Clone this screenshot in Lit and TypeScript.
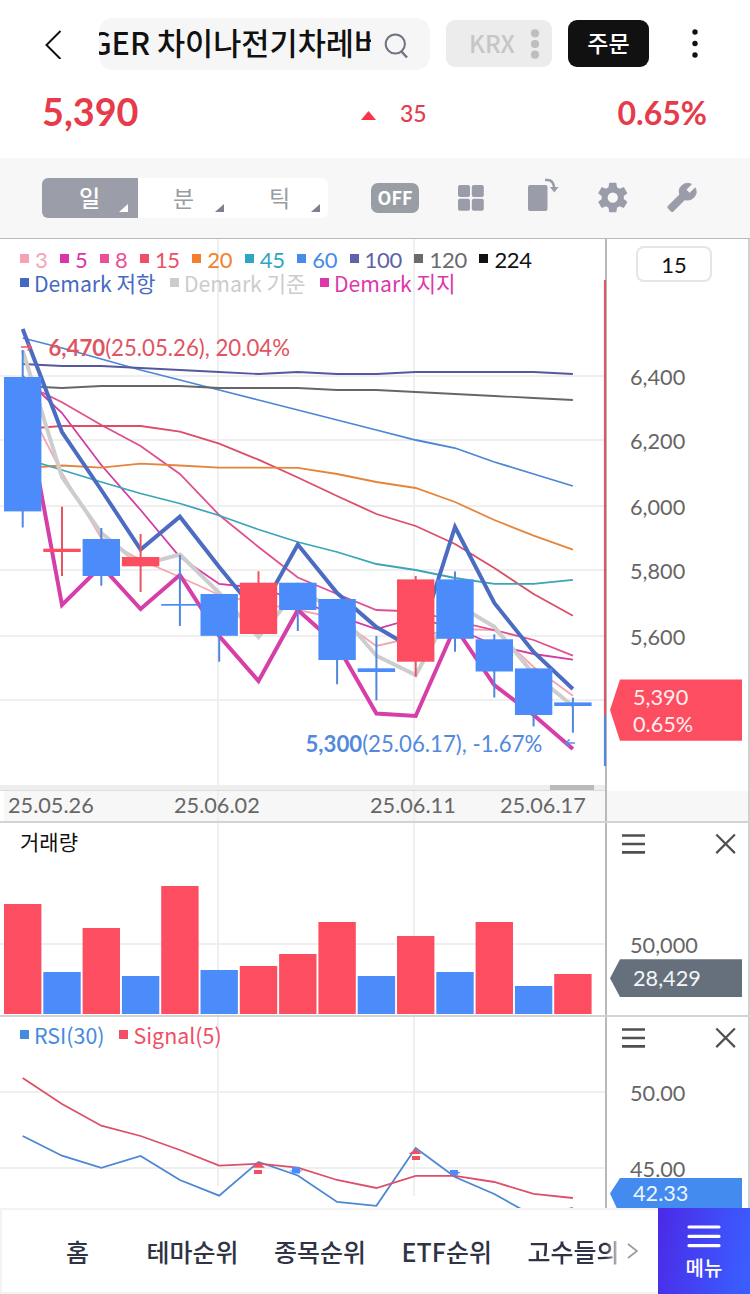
import { html, svg, css, LitElement } from "lit"
import { customElement, property } from "lit/decorators.js"
import { styleMap } from "lit/directives/style-map.js"

const FIRST_X = 22.7
const STEP = 39.3
const BAR = 37.4

const UP = "#fc4e60"
const DOWN = "#4c8cfa"

const x = (i: number) => FIRST_X + STEP * i

// [up, body top, body bottom, wick top, wick bottom]
const candles: [number, number, number, number, number][] = [
  [0, 377, 511.4, 350, 527.5],
  [1, 548.7, 552, 506.7, 576],
  [0, 539, 576, 528, 585.7],
  [1, 557, 566.3, 534, 592],
  [0, 604, 605.7, 555, 626],
  [0, 594, 635.8, 594, 661.7],
  [1, 582.7, 634, 571.3, 634],
  [0, 582.7, 610, 582.7, 631],
  [0, 599, 660, 599, 684.3],
  [0, 668.3, 672, 636, 700.3],
  [1, 579.4, 661.7, 576, 676.7],
  [0, 579.4, 638.8, 571.5, 651.8],
  [0, 639.3, 671.5, 634.3, 697.5],
  [0, 668.4, 715, 668.4, 726.4],
  [0, 702.4, 706, 697.7, 732.7],
]

const lines = [
  { color: "#f5a5b0", width: 1.8, y: [397, 473, 538, 560, 577, 595, 603, 610, 618, 646, 637, 629, 630, 667, 695.7] },
  { color: "#d23aa5", width: 1.8, y: [376, 413, 465, 510, 557, 584, 588, 600, 615.7, 629, 618, 628, 645, 654, 659.7] },
  { color: "#e0508f", width: 1.8, y: [383, 402.3, 425, 446, 474, 515, 547, 577.5, 594, 610, 611.5, 621, 630, 640, 655.7] },
  { color: "#dc4e66", width: 1.8, y: [429, 426, 426, 426, 431.7, 443.7, 459.7, 477.5, 496, 514, 526, 544, 568, 594, 615.7] },
  { color: "#e5853c", width: 1.8, y: [468, 465.5, 467.7, 463.7, 465.5, 467.7, 467.7, 467.9, 474, 482, 488, 502, 520, 535.7, 549.7] },
  { color: "#3ba5b8", width: 1.8, y: [458, 470, 482, 493.5, 503.5, 515.5, 529.5, 542, 552, 564, 570, 578, 583.8, 583.8, 579.8] },
  { color: "#4b87d4", width: 1.8, y: [338, 348, 359, 370, 380, 390, 400, 410, 420, 430, 440, 448, 462, 474, 486] },
  { color: "#5558a0", width: 1.8, y: [364, 366, 366, 368, 370, 372, 374, 372, 374, 374, 372, 372, 372, 372, 374] },
  { color: "#666666", width: 1.8, y: [386, 388, 386, 386, 386, 388, 388, 388, 390, 390, 392, 394, 396, 398, 400] },
  { color: "#cdcdcd", width: 4, y: [350.7, 477, 533, 565, 554.5, 593, 637, 590, 610, 655.7, 675, 603, 626.7, 674, 706] },
  { color: "#d63fa8", width: 4, y: [393, 605, 566, 609, 575, 636, 681, 610, 645, 713.5, 716, 627, 685, 715, 749] },
  { color: "#4b6cc0", width: 4, y: [329, 432, 490, 549.5, 516.7, 567, 615, 544.5, 593, 627, 650, 527, 603, 652, 689] },
]

const volumes: [number, number][] = [
  [1, 904], [0, 972], [1, 928], [0, 976], [1, 886], [0, 970], [1, 966], [1, 954],
  [1, 922], [0, 976], [1, 936], [0, 972], [1, 922], [0, 986], [1, 974],
]

const rsi = [1136, 1155.7, 1167.8, 1156, 1180, 1195.7, 1162, 1175.5, 1202, 1205.8, 1148, 1177, 1194, 1216, 1208]
const signal = [1078, 1104, 1125.7, 1136, 1150, 1165.7, 1163.7, 1167.7, 1180, 1188, 1175.8, 1175.8, 1182, 1193.8, 1198]

const averages = [
  ["3", "#f5a3b3"], ["5", "#d935a8"], ["8", "#ea5097"], ["15", "#ee4f66"], ["20", "#f08030"],
  ["45", "#2fa5c5"], ["60", "#478ae8"], ["100", "#5f62a8"], ["120", "#6b6b6b"], ["224", "#111111"],
]
const demark = [["Demark 저항", "#4668c4"], ["Demark 기준", "#cccccc"], ["Demark 지지", "#dd38ab"]]

const points = (ys: number[]) => ys.map((y, i) => `${x(i).toFixed(1)},${y}`).join(" ")

const polyline = (ys: number[], color: string, width: number) => svg`
  <polyline points=${points(ys)} fill="none" stroke=${color} stroke-width=${width}></polyline>`

const hline = (y: number) => svg`<path d="M0 ${y}H605" stroke="#efefef" stroke-width="2"></path>`

const vlines = (top: number, bottom: number, bottom2 = bottom) => svg`
  <path d="M218 ${top}V${bottom}M414 ${top}V${bottom2}" stroke="#efefef" stroke-width="2"></path>`

const frame = (top: number, bottom: number) => svg`
  <path d="M606 ${top}V${bottom}" stroke="#b9b9b9" stroke-width="2"></path>
  <path d="M749 ${top}V${bottom}" stroke="#bdbdbd" stroke-width="1.4"></path>`

@customElement("chart-legend")
class ChartLegend extends LitElement {
  @property({ attribute: false }) items: string[][] = []

  static styles = css`
  :host {
    display: flex;
    gap: var(--item-gap, 12.5px);
  }

  span {
    display: flex;
    gap: var(--mark-gap, 6px);
    white-space: nowrap;
  }

  i {
    width: 9px;
    height: 9px;
    margin-top: var(--mark-top, 9px);
    background: currentColor;
  }
  `

  render() {
    return this.items.map(([text, color]) => html`
    <span style=${styleMap({ color })}><i></i>${text}</span>
    `)
  }
}

@customElement("pane-actions")
class PaneActions extends LitElement {
  static styles = css`
  :host {
    display: block;
  }

  svg {
    display: block;
  }
  `

  render() {
    return html`
    <svg width="120" height="24" viewBox="0 0 120 24" fill="none" stroke="#505050">
      <path d="M3 3.5h23M3 12h23M3 20.4h23" stroke-width="2.6"></path>
      <path d="M97.3 2.5l18.6 18.6M115.9 2.5L97.3 21.1" stroke-width="2.2"></path>
    </svg>
    `
  }
}

@customElement("app-root")
class AppRoot extends LitElement {
  static styles = css`
  :host {
    display: flex;
    flex-direction: column;
    width: 750px;
    height: 1294px;
    overflow: hidden;
    background: #fff;
    color: #111;
    font-family: "Noto Sans CJK KR", "Noto Sans", sans-serif;
  }

  * {
    box-sizing: border-box;
  }

  svg {
    display: block;
    flex: none;
  }

  svg text {
    font-family: Lato, "Noto Sans CJK KR", sans-serif;
    font-size: 21.7px;
    fill: #666;
  }

  svg .extreme {
    font-size: 22.2px;
  }

  header {
    display: flex;
    flex: none;
    align-items: center;
    height: 88px;
    padding-left: 44px;
  }

  .search {
    display: flex;
    align-items: center;
    width: 331px;
    height: 52px;
    margin-left: 37px;
    border-radius: 14px;
    background: #f6f6f6;
  }

  .name {
    width: 272px;
    height: 52px;
    overflow: hidden;
    font-size: 30.6px;
    font-weight: 500;
    line-height: 49px;
    white-space: nowrap;
  }

  .name span {
    margin-left: -37px;
  }

  .search svg {
    margin-left: 13px;
  }

  .market, .order {
    display: flex;
    align-items: center;
    height: 47px;
    margin: -1px 0 0 16px;
    border-radius: 9px;
    font-weight: 500;
  }

  .market {
    gap: 15px;
    width: 106px;
    padding-left: 23px;
    background: #ececec;
    color: #c6c6c6;
    font-size: 24px;
  }

  .market span, .order span {
    margin-top: -3px;
  }

  .order {
    justify-content: center;
    width: 81px;
    background: #111;
    color: #fff;
    font-size: 23px;
  }

  .more {
    margin-left: 42px;
  }

  .quote {
    display: grid;
    flex: none;
    grid-template-columns: 318px 1fr auto;
    align-items: center;
    height: 70px;
    padding: 0 43px 22px;
    color: #e63b4b;
    font-family: Lato, sans-serif;
    font-weight: 700;
  }

  .price {
    margin: -2px 0 0 -1px;
    font-size: 37.8px;
  }

  .change {
    display: flex;
    align-items: center;
    gap: 24px;
    padding-top: 2px;
    font-size: 23px;
    font-weight: 500;
  }

  .change svg {
    margin-top: 5px;
  }

  .rate {
    font-size: 32px;
  }

  .toolbar {
    display: flex;
    flex: none;
    align-items: center;
    height: 81px;
    padding: 0 0 1px 42px;
    border-bottom: 1px solid #b9b9b9;
    background: #f7f7f7;
  }

  .periods {
    display: flex;
    flex: none;
    width: 286px;
    height: 40px;
    border-radius: 6px;
    overflow: hidden;
    background: #fff;
    color: #999ba1;
    font-size: 23px;
    line-height: 38px;
  }

  .periods div {
    display: flex;
    flex: none;
    justify-content: space-between;
    width: 96px;
    padding-left: 35px;
  }

  .periods svg {
    margin: 26px 10px 0 0;
    fill: #7d818c;
  }

  .periods .on {
    background: #9b9ea9;
    color: #fff;
    font-weight: 500;
    padding-left: 37px;
  }

  .periods .on svg {
    fill: #fff;
  }

  .off {
    flex: none;
    width: 48px;
    height: 30px;
    margin-left: 43px;
    border-radius: 7px;
    background: #999ea4;
    color: #fff;
    font-size: 18px;
    font-weight: 700;
    line-height: 28px;
    text-align: center;
  }

  .tools {
    flex: none;
    fill: #9a9da9;
  }

  .pane {
    display: grid;
    grid-template: 100% / 100%;
    flex: none;
  }

  .pane > * {
    grid-area: 1 / 1;
  }

  .price-pane {
    height: 546px;
  }

  .volume-pane {
    height: 194px;
    border-top: 2px solid #d3d3d3;
  }

  .rsi-pane {
    height: 193px;
    border-top: 2px solid #d3d3d3;
  }

  .head {
    display: flex;
    align-items: flex-start;
    justify-content: space-between;
    padding: 0 11px 0 20px;
    z-index: 1;
  }

  .title {
    font-size: 21px;
    line-height: 24px;
    padding-top: 6px;
  }

  .rsi-legend {
    --mark-top: 9px;
    --mark-gap: 5px;
    --item-gap: 15px;
    font-size: 21.4px;
    line-height: 28px;
    padding-top: 4px;
  }

  pane-actions {
    padding-top: 9px;
  }

  .count {
    width: 76px;
    height: 36px;
    margin: 7px 27px 0 0;
    border: 2px solid #e5e5e5;
    border-radius: 8px;
    font: 22px/33px Lato, sans-serif;
    text-align: center;
  }

  .averages {
    --mark-top: 7px;
    padding-top: 8px;
    font: 22px/26px Lato, sans-serif;
    letter-spacing: -.3px;
  }

  .demark {
    --mark-top: 6px;
    --mark-gap: 5px;
    --item-gap: 14.5px;
    font-size: 21.2px;
    line-height: 21px;
    margin-top: -1px;
  }

  nav {
    display: flex;
    flex: none;
    height: 86px;
    background: #fff;
    z-index: 1;
  }

  .links {
    display: flex;
    align-items: center;
    width: 658px;
    padding: 0 0 0 64px;
    border: 2px solid #f3f3f3;
    border-right: 0;
    color: #2f3345;
    font-size: 25px;
    font-weight: 500;
    white-space: nowrap;
  }

  .links span {
    margin-right: 35.5px;
  }

  .links .home {
    margin-right: 57.5px;
  }

  .links .last {
    width: 94px;
    margin-right: 6px;
    overflow: hidden;
    -webkit-mask-image: linear-gradient(90deg, #000 84%, rgba(0, 0, 0, .2) 98%);
    mask-image: linear-gradient(90deg, #000 84%, rgba(0, 0, 0, .2) 98%);
  }

  .menu {
    display: flex;
    flex-direction: column;
    align-items: center;
    width: 92px;
    padding-top: 16px;
    background: linear-gradient(100deg, #4a2ce8 5%, #3b5cff 90%);
    color: #fff;
    font-size: 20px;
    font-weight: 500;
    line-height: 28px;
  }

  .menu svg {
    margin-bottom: 4px;
  }
  `

  renderHeader() {
    return html`
    <header>
      <svg width="18" height="30" viewBox="0 0 18 30" fill="none" stroke="#111" stroke-width="2">
        <path d="M16.5 2L2.5 16l14 14"></path>
      </svg>
      <div class="search">
        <div class="name"><span>TIGER 차이나전기차레버리지</span></div>
        <svg width="26" height="28" viewBox="0 0 26 28" fill="none" stroke="#70747f" stroke-width="2">
          <circle cx="11.3" cy="14" r="9.6"></circle>
          <path d="M17 21l6 6.500" stroke-width="2.400"></path>
        </svg>
      </div>
      <div class="market"><span>KRX</span>
        <svg width="10" height="30" fill="#bebebe">
          <circle cx="5" cy="4.300" r="4.100"></circle>
          <circle cx="5" cy="15" r="4.100"></circle>
          <circle cx="5" cy="25.700" r="4.100"></circle>
        </svg>
      </div>
      <div class="order"><span>주문</span></div>
      <svg class="more" width="8" height="30" fill="#111">
        <circle cx="4" cy="3" r="2.700"></circle>
        <circle cx="4" cy="14.500" r="2.700"></circle>
        <circle cx="4" cy="26" r="2.700"></circle>
      </svg>
    </header>
    <div class="quote">
      <span class="price">5,390</span>
      <span class="change">
        <svg width="15" height="9" fill="#fa3549"><path d="M7.500 0L15 9H0z"></path></svg>35
      </span>
      <span class="rate">0.65%</span>
    </div>
    `
  }

  renderToolbar() {
    return html`
    <div class="toolbar">
      <div class="periods">
        ${["일", "분", "틱"].map((name, i) => html`
        <div class=${i ? "" : "on"}>${name}<svg width="9" height="8"><path d="M9 0V8H0z"></path></svg></div>
        `)}
      </div>
      <div class="off">OFF</div>
      <svg class="tools" width="331" height="50" viewBox="401 173 331 50">
        <rect x="440" y="185" width="12" height="12" rx="2"></rect>
        <rect x="453.800" y="185" width="12" height="12" rx="2"></rect>
        <rect x="440" y="198.800" width="12" height="12" rx="2"></rect>
        <rect x="453.800" y="198.800" width="12" height="12" rx="2"></rect>
        <rect x="510" y="185" width="19.500" height="26" rx="2"></rect>
        <path d="M527 180h2.500q6 0 6.700 8" fill="none" stroke="#9a9da9" stroke-width="2.400"></path>
        <path d="M532 187h8.500l-4.200 5.500z"></path>
        <path transform="translate(577 179.800) scale(1.480)" d="M19.430 12.980c.040-.320.070-.640.070-.980s-.030-.660-.070-.980l2.110-1.650c.190-.150.240-.420.120-.640l-2-3.460c-.120-.220-.390-.300-.610-.220l-2.490 1c-.520-.400-1.080-.730-1.690-.980l-.380-2.650A.488.488 0 0 0 14 2h-4c-.250 0-.460.180-.490.420l-.380 2.650c-.610.250-1.170.590-1.690.980l-2.490-1c-.230-.090-.490 0-.610.220l-2 3.460c-.130.220-.070.490.120.640l2.110 1.650c-.040.320-.070.650-.070.980s.030.660.070.980l-2.110 1.650c-.190.150-.240.420-.120.640l2 3.460c.120.220.390.300.610.220l2.490-1c.520.400 1.080.730 1.690.980l.380 2.650c.030.240.240.420.490.420h4c.250 0 .460-.180.490-.420l.380-2.650c.610-.250 1.170-.590 1.690-.980l2.490 1c.230.090.490 0 .610-.220l2-3.460c.120-.220.070-.490-.120-.640l-2.110-1.650zM12 15.500a3.500 3.500 0 1 1 0-7 3.500 3.500 0 0 1 0 7z"></path>
        <path transform="translate(679.300 182) scale(-1.280 1.280)" stroke="#9a9da9" stroke-width=".8" stroke-linejoin="round" d="M22.700 19l-9.100-9.100c.9-2.300.4-5-1.500-6.900-2-2-5-2.400-7.400-1.300L9 6 6 9 1.600 4.700C.4 7.100.9 10.100 2.900 12.100c1.900 1.900 4.600 2.400 6.900 1.500l9.100 9.100c.4.4 1 .4 1.400 0l2.300-2.300c.5-.4.5-1.100.1-1.400z"></path>
      </svg>
    </div>
    `
  }

  renderPrice() {
    return html`
    <div class="pane price-pane">
      <svg width="750" height="546" viewBox="0 239 750 546">
        ${[376, 440, 506, 570, 636, 700].map(hline)}
        ${vlines(239, 785)}
        ${lines.map(l => polyline(l.y, l.color, l.width))}
        ${candles.map(([up, top, bottom, high, low], i) => svg`
          <path d="M${x(i)} ${high}V${low}" stroke=${up ? "#ea5362" : "#5088dc"} stroke-width="2"></path>
          <rect x=${x(i) - BAR / 2} y=${top} width=${BAR} height=${bottom - top} fill=${up ? UP : DOWN}></rect>
        `)}
        <path d="M21 347h10M27.500 343.500l3.500 3.500-3.500 3.500" fill="none" stroke="#f0566a" stroke-width="1.600"></path>
        <path d="M575 743h-9M569.500 739.500l-3.500 3.500 3.500 3.500" fill="none" stroke="#5a8fe8" stroke-width="1.600"></path>
        <text class="extreme" x="48.500" y="356" style="fill:#e15361"><tspan font-weight="700">6,470</tspan>(25.05.26), 20.04%</text>
        <text class="extreme" x="305.500" y="752" style="fill:#5389dc"><tspan font-weight="700">5,300</tspan>(25.06.17), -1.67%</text>
        ${frame(239, 785)}
        <path d="M605 280V716" stroke="#dc5a66" stroke-width="2.200"></path>
        <path d="M605 716V766" stroke="#5389dc" stroke-width="2.200"></path>
        ${["6,400", "6,200", "6,000", "5,800", "5,600"].map((t, i) => svg`
          <text x="630" y=${[385, 449, 515, 579, 645][i]}>${t}</text>
        `)}
        <path d="M610 710l10-30.500h122v61.200H620z" fill=${UP}></path>
        <text x="633" y="705" style="fill:#ffeef0">5,390</text>
        <text x="633" y="732" style="fill:#ffeef0">0.65%</text>
      </svg>
      <div class="head">
        <div>
          <chart-legend class="averages" .items=${averages}></chart-legend>
          <chart-legend class="demark" .items=${demark}></chart-legend>
        </div>
        <div class="count">15</div>
      </div>
    </div>
    <svg width="750" height="36" viewBox="0 785 750 36">
      <path d="M4 791h745v30H4z" fill="#f7f7f7"></path>
      <path d="M0 785h605v5H0z" fill="#eee"></path>
      <path d="M550 785h44v5h-44z" fill="#bababa"></path>
      <path d="M0 790.500H605" stroke="#dcdcdc"></path>
      ${vlines(791, 821)}
      ${frame(785, 821)}
      ${["25.05.26", "25.06.02", "25.06.11", "25.06.17"].map((t, i) => svg`
        <text x=${[8, 174, 370, 500][i]} y="813">${t}</text>
      `)}
    </svg>
    `
  }

  renderVolume() {
    return html`
    <div class="pane volume-pane">
      <svg width="750" height="192" viewBox="0 823 750 192">
        ${hline(944)}
        ${vlines(823, 1015)}
        ${volumes.map(([up, top], i) => svg`
          <rect x=${x(i) - BAR / 2} y=${top} width=${BAR} height=${1014 - top} fill=${up ? UP : DOWN}></rect>
        `)}
        ${frame(823, 1015)}
        <text x="630" y="953">50,000</text>
        <path d="M610 978.300l10-19h122V997H620z" fill="#66707c"></path>
        <text x="633" y="986" style="fill:#f4f6f8">28,429</text>
      </svg>
      <div class="head">
        <span class="title">거래량</span>
        <pane-actions></pane-actions>
      </div>
    </div>
    `
  }

  renderRsi() {
    return html`
    <div class="pane rsi-pane">
      <svg width="750" height="191" viewBox="0 1017 750 191">
        ${[1092, 1168].map(hline)}
        ${vlines(1017, 1186, 1196)}
        ${polyline(rsi, "#4b87d4", 1.8)}
        ${polyline(signal, "#dc5068", 1.8)}
        <path d="M258.500 1162l6.500 5.700h-12zM254 1170h8v4h-8zM416 1149l5.500 5h-13zM412 1156h8v4h-8z" fill="#f0505f"></path>
        <path d="M292 1167h8v6.500h-8zM289 1170.500h14l-7 3zM450 1170h8v5h-8zM450 1172h11l-7 4z" fill=${DOWN}></path>
        ${frame(1017, 1208)}
        <text x="630" y="1101">50.00</text>
        <text x="630" y="1177">45.00</text>
        <path d="M610 1193.500l10-15.500h122v37H620z" fill="#438bee"></path>
        <text x="633" y="1201" style="fill:#eef5ff">42.33</text>
      </svg>
      <div class="head">
        <chart-legend class="rsi-legend" .items=${[["RSI(30)", "#438be0"], ["Signal(5)", "#f04f66"]]}></chart-legend>
        <pane-actions></pane-actions>
      </div>
    </div>
    `
  }

  renderNav() {
    return html`
    <nav>
      <div class="links">
        <span class="home">홈</span>
        <span>테마순위</span>
        <span>종목순위</span>
        <span>ETF순위</span>
        <span class="last">고수들의</span>
        <svg width="12" height="18" fill="none" stroke="#9a9a9a" stroke-width="1.600">
          <path d="M1 2l9 7-9 7"></path>
        </svg>
      </div>
      <div class="menu">
        <svg width="34" height="26" fill="none" stroke="#fff" stroke-width="3.200" stroke-linecap="round">
          <path d="M2 3h30M2 12.400h30M2 21.700h30"></path>
        </svg>
        메뉴
      </div>
    </nav>
    `
  }

  render() {
    return html`
    ${this.renderHeader()}
    ${this.renderToolbar()}
    ${this.renderPrice()}
    ${this.renderVolume()}
    ${this.renderRsi()}
    ${this.renderNav()}
    `
  }
}
